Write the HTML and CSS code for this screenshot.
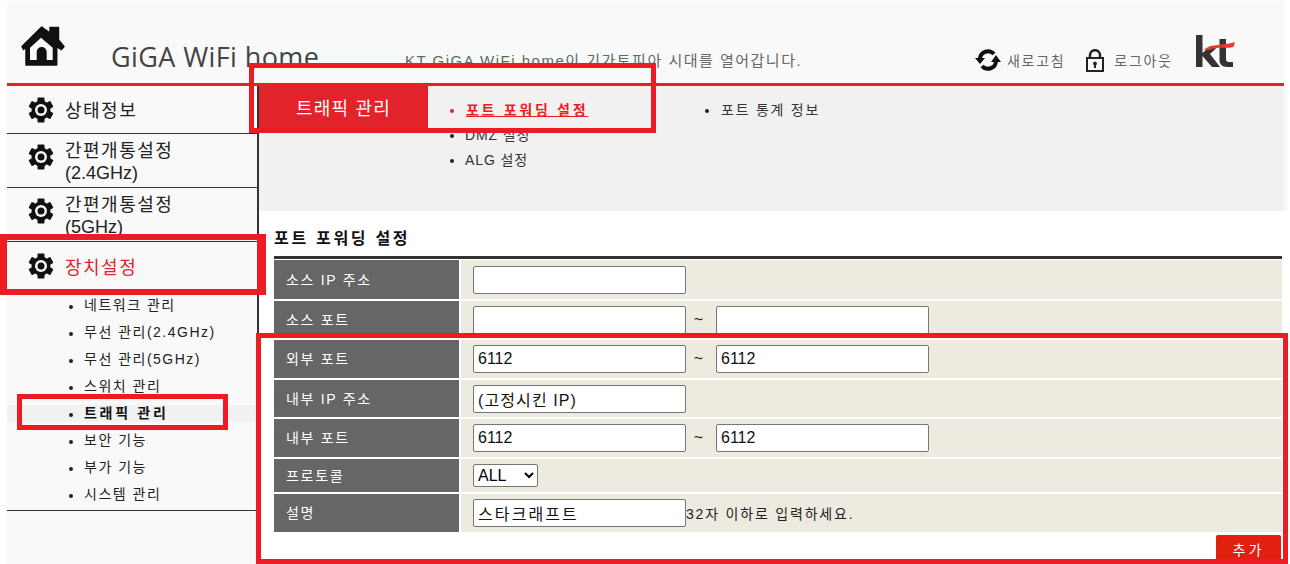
FILE: index.html
```html
<!doctype html>
<html lang="ko">
<head>
	<meta charset="UTF-8">
	<title>GiGA WiFi home</title>
	<link rel="stylesheet" href="styles.css">
</head>
<body>
	<svg class="defs" width="0" height="0">
		<symbol id="gear" viewBox="0 0 26 26">
			<g fill="#111">
				<rect x="9.500" y="0.500" width="7" height="25" rx="1"/>
				<rect x="9.500" y="0.500" width="7" height="25" rx="1" transform="rotate(60 13 13)"/>
				<rect x="9.500" y="0.500" width="7" height="25" rx="1" transform="rotate(120 13 13)"/>
				<circle cx="13" cy="13" r="9.500"/>
			</g>
			<circle cx="13" cy="13" r="6" fill="#f9f9f9"/>
			<circle cx="13" cy="13" r="3.500" fill="#111"/>
		</symbol>
	</svg>

	<div class="header">
		<a class="home">
			<svg width="44" height="40" viewBox="0 0 44 40">
				<path fill="#111" stroke="#111" stroke-linejoin="round" stroke-width="1.500" d="M20.700 1 29 7V1.500h8.500V14L43 20.500l-2.500 3-4.800-3V39H5V20.500l-2.500 3-1.500-3z"/>
				<path fill="#f9f9f9" d="M20 11.700 9 21.700V34h6.700V26a5 5 0 0 1 10 0v8h6V21.700z"/>
			</svg>
		</a>
		<div class="brand">GiGA WiFi home</div>
		<div class="slogan">KT GiGA WiFi home이 기가토피아 시대를 열어갑니다.</div>
		<div class="tools">
			<a class="tool">
				<svg width="26" height="22" viewBox="0 0 26 22">
					<path fill="none" stroke="#111" stroke-width="4" d="M5 10a8 8 0 0 1 14-5M21 12a8 8 0 0 1-14 5"/>
					<path fill="#111" d="M0 9h10l-5 6zM16 13h10l-5-7z"/>
				</svg>
				새로고침
			</a>
			<a class="tool">
				<svg class="lock" width="18" height="23" viewBox="0 0 18 23">
					<path fill="none" stroke="#222" stroke-width="2.500" d="M4 9V6a5 4.800 0 0 1 10 0v3"/>
					<rect x="1" y="9" width="16" height="13" fill="none" stroke="#222" stroke-width="2"/>
					<path fill="#222" d="M9 12.500a2 2 0 0 1 1 3.700V19H8v-2.800a2 2 0 0 1 1-3.700z"/>
				</svg>
				로그아웃
			</a>
		</div>
		<svg class="logo" width="40" height="32" viewBox="0 0 40 32">
			<path fill="#333" d="M1 0h6.500v18l8-7h8L15 19l10 13h-8L7.500 21v11H1zM24.500 4h6.500v20c0 2 1 3 3 3h4v5h-6c-5 0-7.500-3-7.500-7z"/>
			<path fill="#e8392f" d="M9 15C16 8 28 11 40 7l-1.500 5c-8 2-17-1-24 3z"/>
		</svg>
	</div>

	<div class="main">
		<div class="side">
			<div class="menu menu-one"><svg class="gear"><use href="#gear"/></svg><span><span class="ko">상태정보</span></span></div>
			<div class="menu menu-two"><svg class="gear"><use href="#gear"/></svg><span><span class="ko">간편개통설정</span><br>(2.4GHz)</span></div>
			<div class="menu menu-two"><svg class="gear"><use href="#gear"/></svg><span><span class="ko">간편개통설정</span><br>(5GHz)</span></div>
			<div class="menu menu-on"><svg class="gear"><use href="#gear"/></svg><span><span class="ko">장치설정</span></span></div>
			<ul class="sub">
				<li>네트워크 관리</li>
				<li>무선 관리(2.4GHz)</li>
				<li>무선 관리(5GHz)</li>
				<li>스위치 관리</li>
				<li class="sub-on">트래픽 관리</li>
				<li>보안 기능</li>
				<li>부가 기능</li>
				<li>시스템 관리</li>
			</ul>
		</div>
		<div class="content">
			<div class="tabs">
				<div class="tab-title">트래픽 관리</div>
				<ul class="tab-list">
					<li class="tab-on">포트 포워딩 설정</li>
					<li class="tab-latin">DMZ 설정</li>
					<li class="tab-latin">ALG 설정</li>
				</ul>
				<ul class="tab-list">
					<li>포트 통계 정보</li>
				</ul>
			</div>
			<div class="form">
				<h3>포트 포워딩 설정</h3>
				<table>
					<tr class="r38"><th>소스 IP 주소</th><td><input type="text"></td></tr>
					<tr class="r37"><th>소스 포트</th><td><input type="text"><span class="tilde">~</span><input type="text"></td></tr>
					<tr class="r38"><th>외부 포트</th><td><input type="text" value="6112"><span class="tilde">~</span><input type="text" value="6112"></td></tr>
					<tr class="r37"><th>내부 IP 주소</th><td><input class="input-ip" type="text" value="(고정시킨 IP)"></td></tr>
					<tr class="r38"><th>내부 포트</th><td><input type="text" value="6112"><span class="tilde">~</span><input type="text" value="6112"></td></tr>
					<tr class="r33"><th>프로토콜</th><td><select><option>ALL</option></select></td></tr>
					<tr class="r38"><th>설명</th><td><input class="input-ko" type="text" value="스타크래프트"><span class="hint">32자 이하로 입력하세요.</span></td></tr>
				</table>
				<div class="btns"><button>추가</button></div>
			</div>
		</div>
	</div>

	<div class="mark mark-tab"></div>
	<div class="mark mark-menu"></div>
	<div class="mark mark-sub"></div>
	<div class="mark mark-form"></div>
</body>
</html>
```

FILE: styles.css
```css
*{
	margin: 0;
	padding: 0;
	box-sizing: border-box;
}
html,body{
	height: 100%;
	overflow: hidden;
}
body{
	background: #fff;
	color: #222;
	font-family: "Liberation Sans", "Noto Sans CJK KR", sans-serif;
	font-size: 14px;
	padding: 1px 0 0 7px;
	position: relative;
}
ul{
	list-style: none;
}
.defs{
	position: absolute;
}

.header{
	width: 1277px;
	height: 85px;
	background: #f9f9f9;
	border-bottom: 3px solid #e2242a;
	display: flex;
	position: relative;
}
.home{
	margin: 25px 0 0 14px;
	width: 44px;
}
.brand{
	margin: 37px 0 0 46px;
	width: 294px;
	font-family: "Open Sans", sans-serif;
	font-size: 27px;
	line-height: 37px;
	letter-spacing: .4px;
	color: #444;
	white-space: nowrap;
}
.slogan{
	margin-top: 50px;
	width: 570px;
	font-size: 15px;
	line-height: 20px;
	letter-spacing: 1.5px;
	color: #666;
	white-space: nowrap;
}
.tools{
	margin-top: 46px;
	display: flex;
	gap: 21px;
	height: 26px;
}
.tool{
	display: flex;
	align-items: center;
	gap: 6px;
	font-size: 14px;
	letter-spacing: 1.7px;
	color: #666;
}
.lock{
	margin-right: 4px;
}
.logo{
	margin: 34px 0 0 22px;
}

.main{
	width: 1281px;
	height: 478px;
	display: flex;
	background: #f9f9f9;
}
.side{
	width: 252px;
	flex: none;
	background: #f9f9f9;
}
.menu{
	border-right: 2px solid #333;
	border-bottom: 1px solid #333;
	display: flex;
	align-items: center;
	gap: 11px;
	padding-left: 21px;
	height: 48px;
	font-size: 18px;
	line-height: 22px;
	color: #222;
}
.ko{
	letter-spacing: 1.5px;
}
.menu-one span{
	margin-top: 2px;
}
.menu-two{
	height: 54px;
}
.menu-two .gear{
	margin-bottom: 7px;
}
.menu-two > span{
	margin-top: 3px;
}
.menu-on{
	height: 51px;
	color: #e2242a;
	border-bottom: 0;
}
.menu-on .gear{
	margin-bottom: 3px;
}
.gear{
	width: 26px;
	height: 26px;
	flex: none;
}
.sub{
	height: 218px;
	border-right: 2px solid #333;
	border-bottom: 1px solid #333;
}
.sub li{
	height: 27px;
	line-height: 25px;
	padding-left: 77px;
	font-size: 14px;
	letter-spacing: 1.5px;
	position: relative;
}
.sub li::before,
.tab-list li::before{
	content: "";
	position: absolute;
	width: 4px;
	height: 4px;
	border-radius: 50%;
	background: #222;
	left: 62px;
	top: 12px;
}
.sub .sub-on{
	font-weight: bold;
	letter-spacing: 2.7px;
	color: #111;
	background: linear-gradient(#f9f9f9 4px, #f1f1f1 4px, #f1f1f1 21px, #f9f9f9 21px);
}

.content{
	flex: 1;
	display: flex;
	flex-direction: column;
}
.tabs{
	flex: none;
	height: 125px;
	background: #f1f1f1;
	display: flex;
	width: 1025px;
}
.tab-title{
	width: 169px;
	height: 44px;
	background: #e2242a;
	color: #fff;
	font-size: 18px;
	letter-spacing: 1.2px;
	line-height: 47px;
	text-align: center;
}
.tab-list{
	width: 255px;
	padding: 12px 0 0 38px;
}
.tab-list li{
	height: 25px;
	line-height: 25px;
	font-size: 14px;
	letter-spacing: 1.75px;
	color: #333;
	position: relative;
}
.tab-list li::before{
	left: -16px;
	top: 11px;
}
.tab-list .tab-latin{
	letter-spacing: .9px;
	left: -1px;
}
.tab-list .tab-latin::before{
	left: -15px;
}
.tab-list .tab-on{
	color: #ed1c24;
	font-weight: bold;
	letter-spacing: 2.7px;
	text-decoration: underline;
}
.tab-list .tab-on::before{
	background: #ed1c24;
}

.form{
	flex: 1;
	background: #fff;
	padding: 18px 0 0 15px;
}
.form h3{
	font-size: 16px;
	line-height: 20px;
	letter-spacing: 2.7px;
	color: #111;
	padding-bottom: 7px;
	width: 1008px;
	border-bottom: 3px solid #333;
	margin-bottom: 1px;
}
table{
	border-collapse: collapse;
	width: 1008px;
}
tr{
	border-bottom: 2px solid #fff;
}
th{
	width: 186px;
	background: #666;
	border-right: 2px solid #fff;
	color: #fff;
	font-weight: normal;
	font-size: 14px;
	letter-spacing: 1.7px;
	text-align: left;
	padding: 0 0 2px 12px;
}
td{
	background: #edeae0;
	padding-left: 12px;
	font-size: 14px;
}
.r38{
	height: 40px;
}
.r37{
	height: 39px;
}
.r33{
	height: 35px;
}
input{
	width: 213px;
	height: 28px;
	border: 1px solid #767676;
	border-radius: 2px;
	padding: 0 4px;
	font-family: "Liberation Sans", "Noto Sans CJK KR", sans-serif;
	font-size: 16px;
	color: #111;
	vertical-align: middle;
}
.input-ko{
	letter-spacing: 2.1px;
}
.input-ip{
	letter-spacing: 1.1px;
}
select{
	width: 65px;
	height: 23px;
	font-family: "Liberation Sans", sans-serif;
	font-size: 16px;
	background: #fff;
	border: 1px solid #767676;
	border-radius: 2px;
	vertical-align: middle;
}
.tilde{
	display: inline-block;
	width: 30px;
	padding-right: 5px;
	font-size: 16px;
	text-align: center;
	vertical-align: middle;
}
.hint{
	vertical-align: middle;
	font-size: 14px;
	letter-spacing: 1.8px;
}
.btns{
	width: 1007px;
	display: flex;
	justify-content: flex-end;
	padding-top: 1px;
}
button{
	width: 65px;
	height: 27px;
	background: #e2200f;
	border: 0;
	border-radius: 2px;
	color: #fff;
	font-family: "Liberation Sans", "Noto Sans CJK KR", sans-serif;
	font-size: 14px;
	letter-spacing: 3px;
}

.mark{
	position: absolute;
	border: 5px solid #ed1c24;
}
.mark-tab{
	left: 249px;
	top: 63px;
	width: 407px;
	height: 70px;
}
.mark-menu{
	left: 0;
	top: 234px;
	width: 266px;
	height: 61px;
	border-width: 6px 9px 6px 7px;
}
.mark-sub{
	left: 17px;
	top: 394px;
	width: 211px;
	height: 36px;
}
.mark-form{
	left: 256px;
	top: 333px;
	width: 1032px;
	height: 231px;
}
```
